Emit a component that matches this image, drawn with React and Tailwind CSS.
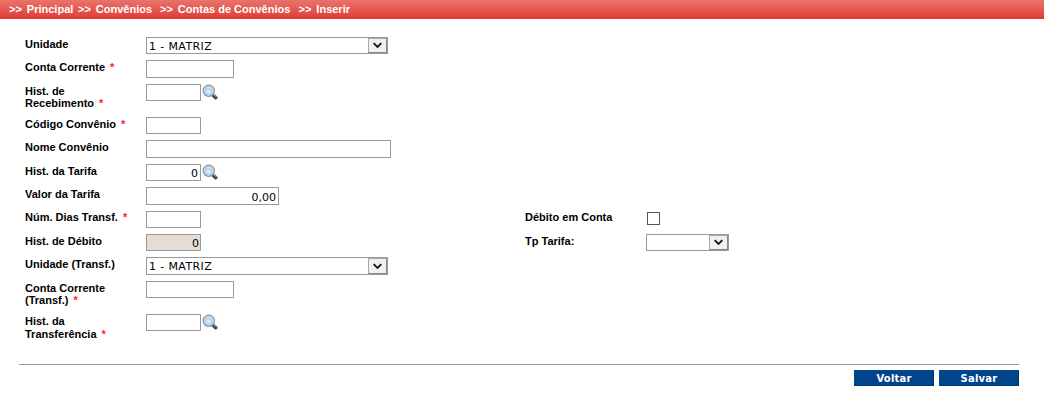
import React from 'react';

function Lens() {
  return (
    <svg className="ml-px h-4 w-4 shrink-0" viewBox="0 0 16 16">
      <defs>
        <radialGradient id="glass" cx="0.45" cy="0.6" r="0.65">
          <stop offset="0" stopColor="#ecfbff" />
          <stop offset="0.5" stopColor="#a9d8ff" />
          <stop offset="1" stopColor="#cfe2f8" />
        </radialGradient>
      </defs>
      <path d="M10.8 10.8L13.7 13.7" stroke="#909090" strokeWidth="4" strokeLinecap="round" />
      <path d="M11.3 11.7L13.8 14" stroke="#3d3d3d" strokeWidth="2.5" strokeLinecap="round" />
      <path d="M11.2 10.4L13.6 12.6" stroke="#b0b0b0" strokeWidth="1" />
      <circle cx="6.8" cy="6.8" r="5.6" fill="#e1e3e7" stroke="#8b8d91" strokeWidth="1.2" />
      <circle cx="6.8" cy="6.8" r="4.1" fill="url(#glass)" stroke="#b3c1d4" strokeWidth="0.6" />
    </svg>
  );
}

function Field({ className, value }) {
  return (
    <input
      readOnly
      value={value || ''}
      className={`block shrink-0 rounded-none border border-[#999] pt-[2px] text-right font-['DejaVu_Sans',sans-serif] text-[11px] font-normal leading-[13px] text-black outline-none ${className}`}
    />
  );
}

function Select({ className, value }) {
  return (
    <div className={`flex shrink-0 border border-[#999] bg-white ${className}`}>
      <span className="flex-1 pl-[2px] pt-[2px] font-['DejaVu_Sans',sans-serif] text-[11px] font-normal leading-[13px] tracking-[0.38px] text-black">{value}</span>
      <span className="flex w-[19px] items-center justify-center border border-[#888] border-l-[#aaa] border-t-[#aaa] bg-[#f0f0f0]">
        <svg className="h-[7px] w-[9px]" viewBox="0 0 9 7">
          <path d="M0.7 1.2L4.5 5L8.3 1.2" fill="none" stroke="#111" strokeWidth="1.8" />
        </svg>
      </span>
    </div>
  );
}

function Label({ lines, required, className = 'w-[121px] leading-[12px]' }) {
  return (
    <label className={`block shrink-0 whitespace-nowrap pt-px ${className}`}>
      {lines.map((line, i) => (
        <span key={line} className="block">
          {line}
          {required && i === lines.length - 1 && <span className="ml-[5px] text-[#ff2020]">*</span>}
        </span>
      ))}
    </label>
  );
}

function Button({ children }) {
  return (
    <button className="h-4 w-20 border border-[#00366f] border-l-[#004b93] border-t-[#004b93] bg-[#00458b] pt-px font-['DejaVu_Sans',sans-serif] text-[10px] font-bold leading-[13px] tracking-[0.2px] text-white">
      {children}
    </button>
  );
}

export default function App() {
  return (
    <div className="h-[419px] w-[1044px] overflow-hidden bg-white font-['Liberation_Sans',Arial,sans-serif] text-[11px] font-bold text-black">
      <nav className="flex h-[19px] bg-linear-to-b from-[#e9736c] to-[#de3834] pl-[9px] leading-[18px] text-white">
        <span className="flex w-[69px] gap-[5px]"><span>&gt;&gt;</span>Principal</span>
        <span className="flex w-[82px] gap-[5px]"><span>&gt;&gt;</span>Convênios</span>
        <span className="flex w-[138.5px] gap-[5px]"><span>&gt;&gt;</span>Contas de Convênios</span>
        <span className="flex gap-[5px]"><span>&gt;&gt;</span>Inserir</span>
      </nav>
      <form className="flex h-[345px] flex-col pl-[25px] pt-[18px]">
        <div className="flex h-[23px] items-start"><Label lines={['Unidade']} /><Select className="h-[17px] w-[242px]" value="1 - MATRIZ" /></div>
        <div className="flex h-6 items-start"><Label lines={['Conta Corrente']} required /><Field className="h-[18px] w-[88px]" /></div>
        <div className="flex h-[33px] items-start"><Label lines={['Hist. de', 'Recebimento']} required /><Field className="h-[17px] w-[55px]" /><Lens /></div>
        <div className="flex h-[23px] items-start"><Label lines={['Código Convênio']} required /><Field className="h-[17px] w-[55px]" /></div>
        <div className="flex h-6 items-start"><Label lines={['Nome Convênio']} /><Field className="h-[18px] w-[245px]" /></div>
        <div className="flex h-[23px] items-start"><Label lines={['Hist. da Tarifa']} /><Field className="h-[17px] w-[55px] pr-[2px]" value="0" /><Lens /></div>
        <div className="flex h-6 items-start"><Label lines={['Valor da Tarifa']} /><Field className="h-[18px] w-[133px] pr-[2px]" value="0,00" /></div>
        <div className="flex h-[23px] items-start">
          <Label lines={['Núm. Dias Transf.']} required className="-mt-px w-[121px] leading-[12px]" />
          <Field className="mr-[324px] h-[17px] w-[55px]" />
          <Label lines={['Débito em Conta']} className="-mt-px w-[121px] leading-[12px]" />
          <span className="ml-px mt-px h-[13px] w-[13px] border border-[#555] bg-white" />
        </div>
        <div className="flex h-[23px] items-start">
          <Label lines={['Hist. de Débito']} />
          <Field className="mr-[324px] h-[17px] w-[55px] bg-[#e5dcd5] pr-px" value="0" />
          <Label lines={['Tp Tarifa:']} />
          <Select className="h-[17px] w-[83px]" />
        </div>
        <div className="flex h-6 items-start"><Label lines={['Unidade (Transf.)']} /><Select className="h-[18px] w-[242px]" value="1 - MATRIZ" /></div>
        <div className="flex h-[33px] items-start"><Label lines={['Conta Corrente', '(Transf.)']} required /><Field className="h-[17px] w-[88px]" /></div>
        <div className="flex items-start"><Label lines={['Hist. da', 'Transferência']} required className="w-[121px] leading-[13px]" /><Field className="h-[17px] w-[55px]" /><Lens /></div>
      </form>
      <footer className="ml-[19px] flex w-[1000px] justify-end gap-[5px] border-t border-[#999] pt-[5px]">
        <Button>Voltar</Button>
        <Button>Salvar</Button>
      </footer>
    </div>
  );
}
